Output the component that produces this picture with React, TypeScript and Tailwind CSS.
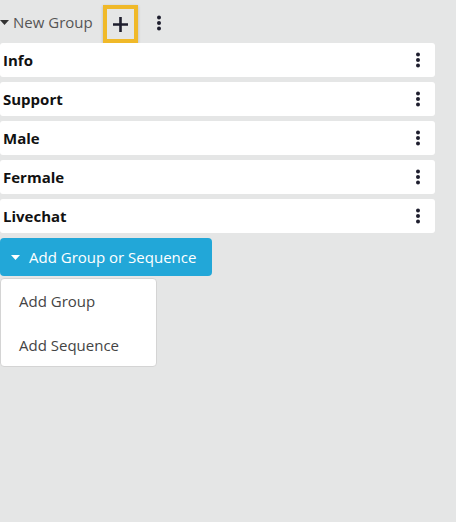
import React from 'react';

const groups = ['Info', 'Support', 'Male', 'Fermale', 'Livechat'];

function Kebab({ className = '' }: { className?: string }) {
  return (
    <svg width="6" height="16" viewBox="0 0 6 16" className={className}>
      <circle cx="3" cy="2.5" r="2" fill="currentColor" />
      <circle cx="3" cy="8" r="2" fill="currentColor" />
      <circle cx="3" cy="13.5" r="2" fill="currentColor" />
    </svg>
  );
}

function Caret({ className = '' }: { className?: string }) {
  return (
    <svg width="9" height="5" viewBox="0 0 9 5" className={className}>
      <path d="M0 0h9L4.5 5z" fill="currentColor" />
    </svg>
  );
}

export default function App() {
  return (
    <div
      className="w-[456px] h-[522px] bg-[#e5e6e6] overflow-hidden"
      style={{ fontFamily: '"Open Sans", "Segoe UI", sans-serif' }}
    >
      <div className="flex items-center h-[43px] pt-[2px]">
        <Caret className="text-[#333]" />
        <span className="ml-[4px] text-[15px] text-[#555]">New Group</span>
        <button className="ml-[10px] self-end w-[35px] h-[38px] border-[4px] border-[#f0b929] flex items-center justify-center shadow-[0_1px_3px_rgba(0,0,0,0.2)]">
          <svg width="15" height="15" viewBox="0 0 15 15">
            <path d="M7.5 0v15M0 7.5h15" stroke="#1e1e2e" strokeWidth="2.6" />
          </svg>
        </button>
        <Kebab className="ml-[18px] text-[#1e1e2e]" />
      </div>

      <div className="flex flex-col gap-[5px] w-[435px]">
        {groups.map((g) => (
          <div key={g} className="h-[34px] bg-white rounded-[3px] flex items-center justify-between pl-[3px] pr-[14px]">
            <span className="text-[15px] font-bold text-[#111]">{g}</span>
            <Kebab className="text-[#1e1e2e]" />
          </div>
        ))}
      </div>

      <button className="mt-[5px] h-[38px] w-[212px] bg-[#22a7d8] rounded-[4px] flex items-center text-white text-[15px]">
        <Caret className="ml-[11px] text-white" />
        <span className="ml-[9px]">Add Group or Sequence</span>
      </button>

      <div className="mt-[2px] w-[157px] h-[89px] bg-white border border-[#d4d4d4] rounded-[4px] flex flex-col justify-center gap-[22px] pl-[18px] text-[15px] text-[#444]">
        <span className="leading-[22px]">Add Group</span>
        <span className="leading-[22px]">Add Sequence</span>
      </div>
    </div>
  );
}
